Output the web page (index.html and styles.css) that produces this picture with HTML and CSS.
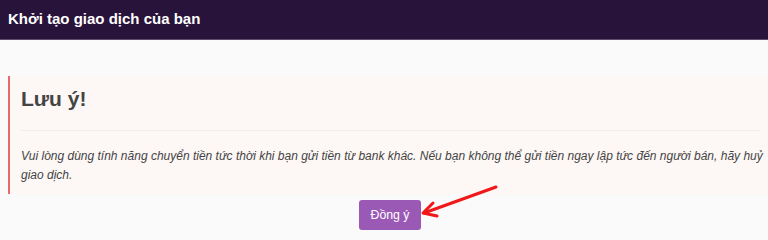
FILE: index.html
```html
<!DOCTYPE html>
<html lang="vi">
<head>
<meta charset="utf-8">
<link rel="stylesheet" href="styles.css">
</head>
<body>
<header class="topbar">Khởi tạo giao dịch của bạn</header>
<main class="content">
  <section class="alert">
    <h2 class="alert-title">Lưu ý!</h2>
    <hr class="alert-rule">
    <p class="alert-text">Vui lòng dùng tính năng chuyển tiền tức thời khi bạn gửi tiền từ bank khác. Nếu bạn không thể gửi tiền ngay lập tức đến người bán, hãy huỷ giao dịch.</p>
  </section>
  <div class="actions">
    <button class="btn">Đồng ý</button>
  </div>
  <svg class="arrow" width="120" height="50" viewBox="0 0 120 50">
    <g fill="none" stroke="#f01818" stroke-width="3" stroke-linecap="round" stroke-linejoin="round">
      <line x1="96" y1="7" x2="24" y2="33"/>
      <polyline points="33,23 23,33 37,36"/>
    </g>
  </svg>
</main>
</body>
</html>
```
FILE: styles.css
```css
* { box-sizing: border-box; }
html, body { margin: 0; padding: 0; }
body {
  background: #fafafa;
  font-family: "Liberation Sans", Arial, sans-serif;
  color: #444;
  width: 768px;
  height: 239px;
  overflow: hidden;
}
.topbar {
  height: 40px;
  background: #28133a;
  border-bottom: 1px solid #5b4d6b;
  color: #fff;
  font-weight: bold;
  font-size: 15px;
  line-height: 38px;
  padding-left: 8px;
}
.content {
  position: relative;
  padding: 36px 0 0 8px;
}
.alert {
  background: #fdf7f5;
  border-left: 2px solid #e8686c;
  padding: 10px 7px 9px 11px;
}
.alert-title {
  margin: 0;
  font-size: 21px;
  line-height: 26px;
  font-weight: bold;
  color: #444;
}
.alert-rule {
  border: 0;
  border-top: 1px solid #eeeeee;
  margin: 18px 0 16px 0;
}
.alert-text {
  margin: 0 -4px 0 0;
  font-style: italic;
  font-size: 12px;
  line-height: 19px;
  color: #444;
}
.actions {
  display: flex;
  justify-content: center;
  padding-top: 6px;
  padding-left: 4px;
}
.btn {
  background: #9b59b6;
  color: #fff;
  border: 0;
  border-radius: 3px;
  width: 62px;
  height: 30px;
  font-family: "Liberation Sans", Arial, sans-serif;
  font-size: 12.3px;
  padding: 0;
}
.arrow {
  position: absolute;
  left: 400px;
  top: 140px;
}
```
